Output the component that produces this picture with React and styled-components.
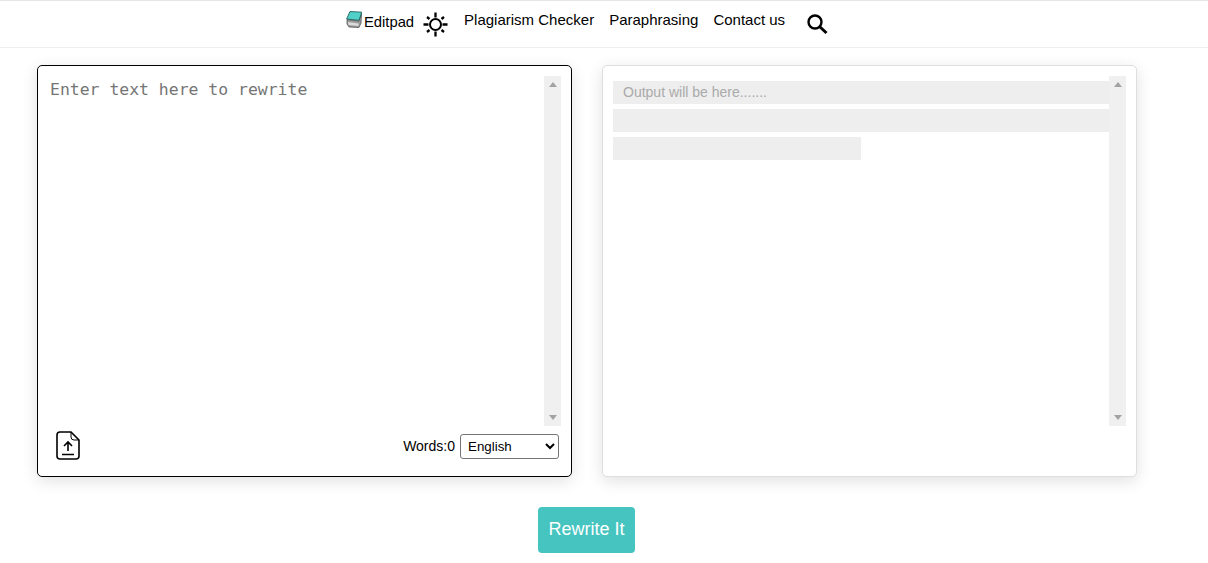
import React from 'react';
import styled, { createGlobalStyle } from 'styled-components';

const GlobalStyle = createGlobalStyle`
  html, body {
    margin: 0;
    background: #fff;
    font-family: "Liberation Sans", Arial, sans-serif;
    color: #000;
  }
  * {
    box-sizing: border-box;
  }
`;

const Header = styled.header`
  height: 48px;
  border-top: 1px solid #e6e6e6;
  border-bottom: 1px solid #eee;
  padding-right: 34px;
  display: flex;
  justify-content: center;
`;

const Nav = styled.nav`
  display: flex;
  align-items: flex-start;
  font-size: 15px;
`;

const Brand = styled.a`
  display: flex;
  align-items: flex-start;
  gap: 2px;
  margin-right: 9px;
  padding-top: 10px;
  font-size: 14.8px;

  span {
    margin-top: 3px;
  }
`;

const SunButton = styled.div`
  width: 25px;
  height: 25px;
  margin: 11px 16px 0 0;
`;

const NavLink = styled.a`
  margin-right: ${p => p.$gap}px;
  padding-top: 10px;
  line-height: 18px;
  white-space: nowrap;
`;

const SearchButton = styled.div`
  width: 22px;
  height: 22px;
  margin-top: 12px;
`;

const Main = styled.main`
  padding: 17px 71px 0 37px;
`;

const Panels = styled.div`
  display: grid;
  grid-template-columns: 535px 535px;
  gap: 30px;
`;

const Panel = styled.section`
  height: 412px;
  padding: 10px 10px 0 ${p => (p.$output ? 10 : 12)}px;
  background: #fff;
  border: 1px solid ${p => (p.$output ? '#dedede' : '#000')};
  border-radius: 5px;
  box-shadow: 0 4px 16px rgba(0, 0, 0, 0.12);
`;

const PanelBody = styled.div`
  display: flex;
  height: 350px;
`;

const Input = styled.textarea`
  flex: 1;
  padding: 4px 0 0;
  border: 0;
  outline: 0;
  resize: none;
  overflow: hidden;
  font-family: "DejaVu Sans Mono", monospace;
  font-size: 16.45px;
  line-height: 20px;

  &::placeholder {
    color: #757575;
    opacity: 1;
  }
`;

const Output = styled.div`
  flex: 1;
  padding-top: 5px;
  display: flex;
  flex-direction: column;
  gap: 5px;
`;

const SkeletonLine = styled.div`
  width: ${p => p.$width};
  height: 23px;
  padding-left: 10px;
  background: #eee;
  color: #aaa;
  font-size: 14px;
  line-height: 23px;
`;

const Scrollbar = styled.div`
  width: 17px;
  display: flex;
  flex-direction: column;
  justify-content: space-between;
  align-items: center;
  padding: 6px 0;
  background: #f0f0f0;
`;

const Arrow = styled.i`
  width: 0;
  height: 0;
  border-left: 4px solid transparent;
  border-right: 4px solid transparent;
  border-${p => (p.$down ? 'top' : 'bottom')}: 5px solid #a3a3a3;
`;

const Footer = styled.div`
  display: flex;
  justify-content: space-between;
  padding: 5px 2px 0 5px;
`;

const UploadButton = styled.div`
  width: 24px;
  height: 29px;
  margin-left: 1px;
`;

const FooterRight = styled.div`
  display: flex;
  align-items: center;
  gap: 5px;
  height: 25px;
  margin-top: 3px;
  font-size: 14px;
`;

const WordCount = styled.span`
  padding-bottom: 2px;
`;

const LanguageSelect = styled.select`
  width: 99px;
  height: 25px;
  padding: 0 3px;
  background: #fff;
  border: 1px solid #767676;
  border-radius: 3px;
  font-family: "Liberation Sans", Arial, sans-serif;
  font-size: 13.33px;
`;

const Actions = styled.div`
  display: flex;
  justify-content: center;
  padding: 30px 1px 0 0;
`;

const RewriteButton = styled.button`
  width: 97px;
  height: 46px;
  padding: 0 0 2px;
  background: #45c4c0;
  border: 0;
  border-radius: 4px;
  color: #fff;
  font-family: "Liberation Sans", Arial, sans-serif;
  font-size: 18px;
`;

const LogoIcon = () => (
  <svg width="16" height="17" viewBox="0 0 16 17">
    <path d="M1 8.500L13 10 L15.500 2 L15 12 L13 16.500 L3 16 L1 13 Z" fill="#9a9a9a" stroke="#555" strokeWidth="0.8" />
    <path d="M2 11 L12.500 12.500 L12.500 15 L2.500 14 Z" fill="#dcdcdc" />
    <path d="M4 0.500 L15.800 1.200 L13 9.300 L0.600 8 Z" fill="#4fd0c8" stroke="#1f5f5c" strokeWidth="0.9" />
  </svg>
);

const SunIcon = () => (
  <svg width="25" height="25" viewBox="0 0 25 25" fill="none" stroke="#000">
    <circle cx="12.500" cy="12.500" r="5.500" strokeWidth="2" />
    <path
      d="M12.500 0.500v5M12.500 19.500v5M0.500 12.500h5M19.500 12.500h5M4 5l2.500 2M18.500 18l2.500 2M4 20l2.500-2M18.500 7L21 5"
      strokeWidth="2.300"
    />
  </svg>
);

const SearchIcon = () => (
  <svg width="22" height="22" viewBox="0 0 22 22" fill="none" stroke="#000">
    <circle cx="9" cy="9" r="6.500" strokeWidth="2.400" />
    <path d="M13.500 13.500L20.500 20" strokeWidth="3" />
  </svg>
);

const UploadIcon = () => (
  <svg width="24" height="29" viewBox="0 0 24 29" fill="none" stroke="#000" strokeWidth="1.600">
    <path d="M4 1h11l8 8v16a3 3 0 0 1-3 3H4a3 3 0 0 1-3-3V4a3 3 0 0 1 3-3z" />
    <path d="M15 1v5a3 3 0 0 0 3 3h5" strokeWidth="1" />
    <path d="M12 20V11M8 15l4-4 4 4M6 23.500h12" />
  </svg>
);

const VerticalBar = () => (
  <Scrollbar>
    <Arrow />
    <Arrow $down />
  </Scrollbar>
);

export default function App() {
  return (
    <>
      <GlobalStyle />
      <Header>
        <Nav>
          <Brand>
            <LogoIcon />
            <span>Editpad</span>
          </Brand>
          <SunButton><SunIcon /></SunButton>
          <NavLink $gap={15}>Plagiarism Checker</NavLink>
          <NavLink $gap={15}>Paraphrasing</NavLink>
          <NavLink $gap={21}>Contact us</NavLink>
          <SearchButton><SearchIcon /></SearchButton>
        </Nav>
      </Header>
      <Main>
        <Panels>
          <Panel>
            <PanelBody>
              <Input placeholder="Enter text here to rewrite" />
              <VerticalBar />
            </PanelBody>
            <Footer>
              <UploadButton><UploadIcon /></UploadButton>
              <FooterRight>
                <WordCount>Words:0</WordCount>
                <LanguageSelect defaultValue="English">
                  <option>English</option>
                </LanguageSelect>
              </FooterRight>
            </Footer>
          </Panel>
          <Panel $output>
            <PanelBody>
              <Output>
                <SkeletonLine $width="100%">Output will be here.......</SkeletonLine>
                <SkeletonLine $width="100%" />
                <SkeletonLine $width="50%" />
              </Output>
              <VerticalBar />
            </PanelBody>
          </Panel>
        </Panels>
        <Actions>
          <RewriteButton>Rewrite It</RewriteButton>
        </Actions>
      </Main>
    </>
  );
}
